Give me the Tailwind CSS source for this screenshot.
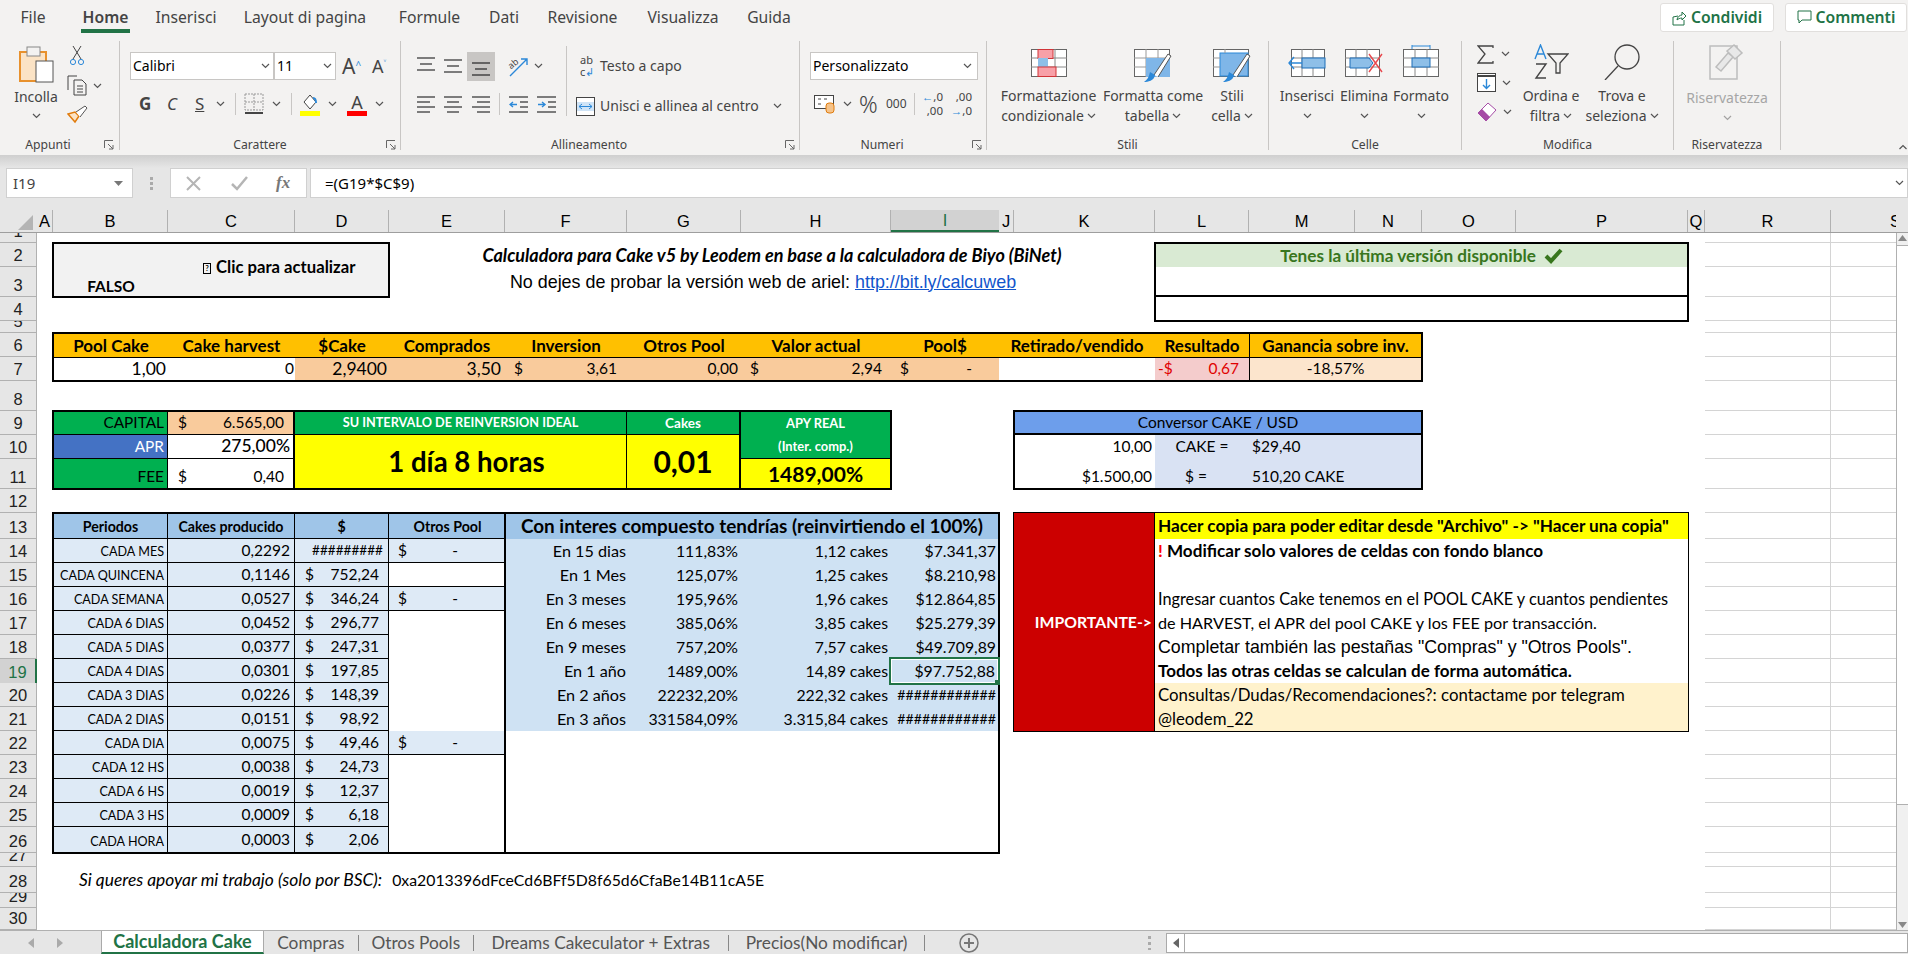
<!DOCTYPE html>
<html lang="it">
<head>
<meta charset="UTF-8" />
<title>Calculadora Cake - Excel</title>
<script src="https://cdn.jsdelivr.net/npm/@tailwindcss/browser@4"></script>
</head>
<body class="w-[1908px] h-[954px] overflow-hidden flex flex-col bg-[#e6e6e6] text-black font-['Lato',sans-serif]">

<svg class="hidden">
  <symbol id="chev" viewBox="0 0 9 6"><path d="M1 1l3.5 3.5L8 1" fill="none" stroke="#555" stroke-width="1.2"/></symbol>
  <symbol id="launch" viewBox="0 0 10 10"><path d="M.5 8V.5H9M4 4l5 5M9 5v4H5" fill="none" stroke="#666"/></symbol>
</svg>

<!-- ribbon tabs -->
<div class="h-[37px] pl-[4px] pb-[2px] flex items-center bg-[#f3f2f1] text-[#444] text-[15.7px] font-['Noto_Sans',sans-serif] relative">
  <div class="w-[60px] pr-[2px] text-center">File</div>
  <div class="w-[83px] text-center font-semibold relative">Home<div class="absolute left-[17px] w-[49px] top-[23px] h-[4px] bg-[#217346]"></div></div>
  <div class="w-[78px] text-center">Inserisci</div>
  <div class="w-[163px] pr-[3px] text-center">Layout di pagina</div>
  <div class="w-[83px] text-center">Formule</div>
  <div class="w-[66px] text-center">Dati</div>
  <div class="w-[91px] text-center">Revisione</div>
  <div class="w-[110px] text-center">Visualizza</div>
  <div class="w-[62px] text-center">Guida</div>
  <div class="ml-auto mr-[1px] flex gap-[11px] text-[#217346] font-semibold">
    <div class="w-[114px] h-[29px] bg-white border border-[#e1dfdd] rounded-[3px] flex items-center justify-center gap-[4px]">
      <svg width="15" height="16" viewBox="0 0 15 16" fill="none" stroke="#217346"><path d="M1 15V7l5-1M1 15h11v-5M5 10c0-3 3-5 5-5V2l4 4-4 4V8c-2 0-4 1-5 2z"/></svg>Condividi</div>
    <div class="w-[122px] h-[29px] bg-white border border-[#e1dfdd] rounded-[3px] flex items-center justify-center gap-[4px]">
      <svg width="15" height="15" viewBox="0 0 15 15" fill="none" stroke="#217346"><path d="M1 1h13v9H5l-3 3v-3H1z"/></svg>Commenti</div>
  </div>
</div>

<!-- ribbon -->
<div class="h-[118px] pt-[4px] flex bg-[#f3f2f1] text-[#444] text-[14px] leading-[20px] font-['Noto_Sans',sans-serif]">

  <!-- Appunti -->
  <div class="relative w-[120px] h-[109px] border-r border-[#c8c6c4] flex">
    <div class="w-[66px] flex flex-col items-center pl-[6px] pt-[5px]">
      <svg width="35" height="37" viewBox="0 0 35 37"><rect x="1" y="6" width="26" height="29" fill="#fbe3c5" stroke="#e8912d" stroke-width="2"/><rect x="8" y="1" width="13" height="9" fill="#f3f2f1" stroke="#888"/><rect x="17" y="15" width="17" height="21" fill="#fff" stroke="#555"/></svg>
      <div class="mt-[4px]">Incolla</div>
      <svg class="w-[9px] h-[6px] mt-[6px]"><use href="#chev"/></svg>
    </div>
    <div class="pt-[4px] pl-[1px] flex flex-col">
      <svg width="20" height="21" viewBox="0 0 20 21" fill="none"><path d="M6 1l8 13M14 1L6 14" stroke="#444"/><circle cx="6" cy="17" r="2.6" stroke="#2b88d8"/><circle cx="14" cy="17" r="2.6" stroke="#2b88d8"/></svg>
      <div class="mt-[9px] flex items-center gap-[5px]">
        <svg width="21" height="21" viewBox="0 0 21 21" fill="none" stroke="#444"><path d="M1 15V1h9M7 5h8l4 4v11H7zM10 11h6M10 14h6M10 17h6"/></svg>
        <svg class="w-[9px] h-[6px]"><use href="#chev"/></svg>
      </div>
      <svg class="mt-[9px]" width="21" height="19" viewBox="0 0 21 19"><path d="M1 9l7 8 4-6-4-4z" fill="#fbe3c5" stroke="#e07b0c" stroke-width="1.5"/><path d="M9 7l9-6 2 2-7 9" fill="#fff" stroke="#555"/></svg>
    </div>
    <div class="absolute inset-x-0 bottom-[-5px] pr-[23px] text-center text-[12.2px]">Appunti</div>
    <svg class="absolute right-[5px] bottom-[0px] w-[10px] h-[10px]"><use href="#launch"/></svg>
  </div>

  <!-- Carattere -->
  <div class="relative w-[281px] h-[109px] border-r border-[#c8c6c4] pl-[10px] pt-[11px]">
    <div class="flex items-center h-[28px]">
      <div class="w-[144px] h-[28px] bg-white border border-[#c8c6c4] flex items-center justify-between pl-[2px] pr-[3px] text-black"><span>Calibri</span><svg class="w-[9px] h-[6px]"><use href="#chev"/></svg></div>
      <div class="w-[62px] h-[28px] bg-white border border-[#c8c6c4] flex items-center justify-between pl-[2px] pr-[3px] text-black"><span>11</span><svg class="w-[9px] h-[6px]"><use href="#chev"/></svg></div>
      <div class="ml-[6px] w-[30px] text-[21px]">A<sup class="text-[#2b88d8] text-[10px]">^</sup></div>
      <div class="text-[18px]">A<sup class="text-[#2b88d8] text-[10px]">˅</sup></div>
    </div>
    <div class="mt-[10px] h-[28px] flex items-center">
      <span class="ml-[9px] w-[28px] font-bold text-[17px]">G</span>
      <span class="w-[28px] italic text-[17px]">C</span>
      <span class="w-[21px] underline text-[17px]">S</span>
      <svg class="w-[9px] h-[6px]"><use href="#chev"/></svg>
      <div class="ml-[10px] w-px h-[22px] bg-[#c8c6c4]"></div>
      <svg class="ml-[8px]" width="20" height="22" viewBox="0 0 20 22" fill="none"><path d="M1 1h18v16H1zM10 1v16M1 9h18" stroke="#999" stroke-dasharray="2 1"/><path d="M1 20h18" stroke="#444" stroke-width="2"/></svg>
      <svg class="ml-[8px] w-[9px] h-[6px]"><use href="#chev"/></svg>
      <div class="ml-[10px] w-px h-[22px] bg-[#c8c6c4]"></div>
      <svg class="ml-[8px]" width="20" height="23" viewBox="0 0 20 23"><path d="M4 9l6-7 6 7-6 7z" fill="#fff" stroke="#444"/><path d="M13 5c3 0 3 3 3 5" stroke="#2b88d8" stroke-width="2" fill="none"/><rect y="18" width="20" height="5" fill="#ffff00"/></svg>
      <svg class="ml-[8px] w-[9px] h-[6px]"><use href="#chev"/></svg>
      <div class="ml-[10px] w-[20px] flex flex-col items-center"><span class="text-[18px] leading-[18px]">A</span><div class="w-[20px] h-[5px] bg-[#ff0000]"></div></div>
      <svg class="ml-[8px] w-[9px] h-[6px]"><use href="#chev"/></svg>
    </div>
    <div class="absolute inset-x-0 bottom-[-5px] text-center text-[12.2px]">Carattere</div>
    <svg class="absolute right-[4px] bottom-[0px] w-[10px] h-[10px]"><use href="#launch"/></svg>
  </div>

  <!-- Allineamento -->
  <div class="relative w-[399px] h-[109px] border-r border-[#c8c6c4] pl-[16px] pt-[11px] flex">
    <div class="flex flex-col">
      <div class="h-[28px] flex items-center">
        <svg width="18" height="20" viewBox="0 0 18 20" stroke="#555" stroke-width="1.4"><path d="M0 2h18M3 8h12M0 14h18"/></svg>
        <svg class="ml-[9px]" width="18" height="20" viewBox="0 0 18 20" stroke="#555" stroke-width="1.4"><path d="M0 4h18M3 10h12M0 16h18"/></svg>
        <div class="ml-[5px] w-[28px] h-[29px] bg-[#c8c6c4] flex items-center justify-center"><svg width="18" height="20" viewBox="0 0 18 20" stroke="#444" stroke-width="1.4"><path d="M0 7h18M3 13h12M0 19h18"/></svg></div>
        <svg class="ml-[13px] overflow-visible" width="21" height="21" viewBox="0 0 21 21" fill="none"><path d="M2 20L19 3M13 3h6v6" stroke="#2b88d8" stroke-width="1.4"/><text x="0" y="11" font-size="9" fill="#444" transform="rotate(-40 5 8)">ab</text></svg>
        <svg class="ml-[5px] w-[9px] h-[6px]"><use href="#chev"/></svg>
      </div>
      <div class="mt-[10px] h-[28px] flex items-center">
        <svg width="18" height="18" viewBox="0 0 18 18" stroke="#555" stroke-width="1.4"><path d="M0 2h18M0 7h13M0 12h18M0 17h13"/></svg>
        <svg class="ml-[9px]" width="18" height="18" viewBox="0 0 18 18" stroke="#555" stroke-width="1.4"><path d="M0 2h18M3 7h12M0 12h18M3 17h12"/></svg>
        <svg class="ml-[10px]" width="18" height="18" viewBox="0 0 18 18" stroke="#555" stroke-width="1.4"><path d="M0 2h18M5 7h13M0 12h18M5 17h13"/></svg>
        <div class="ml-[9px] w-px h-[22px] bg-[#c8c6c4]"></div>
        <svg class="ml-[9px]" width="19" height="18" viewBox="0 0 19 18" fill="none"><path d="M0 2h19M0 17h19M11 7h8M11 12h8" stroke="#555" stroke-width="1.4"/><path d="M8 9.500H1M4 7L1 9.500 4 12" stroke="#2b88d8" stroke-width="1.4"/></svg>
        <svg class="ml-[9px]" width="19" height="18" viewBox="0 0 19 18" fill="none"><path d="M0 2h19M0 17h19M11 7h8M11 12h8" stroke="#555" stroke-width="1.4"/><path d="M1 9.500h7M5 7l3 2.500L5 12" stroke="#2b88d8" stroke-width="1.4"/></svg>
      </div>
    </div>
    <div class="ml-[10px] mt-[-6px] w-px h-[70px] bg-[#c8c6c4]"></div>
    <div class="ml-[9px] flex flex-col">
      <div class="h-[28px] flex items-center pl-[4px]">
        <div class="w-[16px] text-[11px] leading-[12px] text-[#444]"><div>ab</div><div>c<span class="text-[#2b88d8]">↲</span></div></div>
        <span class="ml-[4px]">Testo a capo</span>
      </div>
      <div class="mt-[12px] h-[28px] flex items-center">
        <svg width="19" height="19" viewBox="0 0 19 19" fill="none"><rect x=".5" y=".5" width="18" height="18" stroke="#444" fill="#fff"/><rect x="1" y="5" width="17" height="9" fill="#cfe4f7"/><path d="M3 9.500h13M6 7L3 9.500 6 12M13 7l3 2.500L13 12" stroke="#2b88d8"/></svg>
        <span class="ml-[5px]">Unisci e allinea al centro</span>
        <svg class="ml-[14px] w-[9px] h-[6px]"><use href="#chev"/></svg>
      </div>
    </div>
    <div class="absolute inset-x-0 bottom-[-5px] pr-[22px] text-center text-[12.2px]">Allineamento</div>
    <svg class="absolute right-[4px] bottom-[0px] w-[10px] h-[10px]"><use href="#launch"/></svg>
  </div>

  <!-- Numeri -->
  <div class="relative w-[187px] h-[109px] border-r border-[#c8c6c4] pl-[10px] pt-[11px]">
    <div class="w-[168px] h-[28px] bg-white border border-[#c8c6c4] flex items-center justify-between pl-[2px] pr-[5px] text-black"><span>Personalizzato</span><svg class="w-[9px] h-[6px]"><use href="#chev"/></svg></div>
    <div class="mt-[10px] h-[28px] flex items-center">
      <svg class="ml-[4px]" width="21" height="20" viewBox="0 0 21 20" fill="none"><rect x=".5" y="1.500" width="19" height="13" fill="#fff" stroke="#444"/><path d="M4 5h3M4 10h3M10 5h3" stroke="#444"/><rect x="12" y="9" width="8" height="10" rx="3" fill="#f5c38a" stroke="#e07b0c"/></svg>
      <svg class="ml-[8px] w-[9px] h-[6px]"><use href="#chev"/></svg>
      <span class="ml-[7px] text-[23px] font-light w-[27px]">%</span>
      <span class="text-[12px] w-[28px]">000</span>
      <div class="w-px h-[22px] bg-[#c8c6c4]"></div>
      <div class="ml-[6px] w-[22px] text-[11.5px] leading-[14px] text-right"><div><span class="text-[#2b88d8]">←</span>,0</div><div>,00</div></div>
      <div class="ml-[7px] w-[22px] text-[11.5px] leading-[14px] text-right"><div>,00</div><div><span class="text-[#2b88d8]">→</span>,0</div></div>
    </div>
    <div class="absolute inset-x-0 bottom-[-5px] pr-[22px] text-center text-[12.2px]">Numeri</div>
    <svg class="absolute right-[4px] bottom-[0px] w-[10px] h-[10px]"><use href="#launch"/></svg>
  </div>

  <!-- Stili -->
  <div class="relative w-[282px] h-[109px] border-r border-[#c8c6c4] pt-[8px] pl-[10px] flex text-center">
    <div class="w-[103px] flex flex-col items-center">
      <svg width="36" height="28" viewBox="0 0 36 28"><rect x=".5" y=".5" width="35" height="27" fill="#fff" stroke="#666"/><path d="M12 0v28M24 0v28M0 9h36M0 18h36" stroke="#888"/><rect x="7" y=".5" width="15" height="9" fill="#f8a0a8" stroke="#d13438"/><rect x="7" y="9" width="10" height="9" fill="#8ebfe8"/><rect x="7" y="18" width="18" height="9.500" fill="#f8a0a8" stroke="#d13438"/></svg>
      <div class="mt-[9px]">Formattazione</div>
      <div class="flex items-center gap-[3px]">condizionale <svg class="w-[9px] h-[6px]"><use href="#chev"/></svg></div>
    </div>
    <div class="w-[106px] flex flex-col items-center">
      <svg width="38" height="34" viewBox="0 0 38 34"><rect x=".5" y=".5" width="35" height="27" fill="#fff" stroke="#666"/><path d="M12 0v28M24 0v28M0 9h36M0 18h36" stroke="#999"/><rect x="12" y="9" width="24" height="19" fill="#7fb6e8"/><path d="M20 26L34 5l3 2-13 21" fill="#fff" stroke="#555"/><path d="M10 33c4 0 10-1 11-7l-5-3c-1 5-3 8-6 10z" fill="#2b88d8"/></svg>
      <div class="mt-[3px]">Formatta come</div>
      <div class="flex items-center gap-[3px]">tabella <svg class="w-[9px] h-[6px]"><use href="#chev"/></svg></div>
    </div>
    <div class="w-[52px] flex flex-col items-center">
      <svg width="38" height="34" viewBox="0 0 38 34"><rect x=".5" y=".5" width="35" height="27" fill="#fff" stroke="#666"/><rect x="7" y="4" width="28" height="23" fill="#7fb6e8" stroke="#2b88d8"/><path d="M0 9h7M0 18h7M12 0v4" stroke="#999"/><path d="M20 26L34 5l3 2-13 21" fill="#fff" stroke="#555"/><path d="M10 33c4 0 10-1 11-7l-5-3c-1 5-3 8-6 10z" fill="#2b88d8"/></svg>
      <div class="mt-[3px]">Stili</div>
      <div class="flex items-center gap-[3px]">cella <svg class="w-[9px] h-[6px]"><use href="#chev"/></svg></div>
    </div>
    <div class="absolute inset-x-0 bottom-[-5px] text-center text-[12.2px]">Stili</div>
  </div>

  <!-- Celle -->
  <div class="relative w-[193px] h-[109px] border-r border-[#c8c6c4] pt-[8px] pl-[9px] flex text-center">
    <div class="w-[58px] flex flex-col items-center">
      <svg width="38" height="28" viewBox="0 0 38 28"><rect x="3.500" y=".5" width="33" height="27" fill="#fff" stroke="#666"/><path d="M14 0v28M25 0v28M3 9h34M3 18h34" stroke="#888"/><rect x="14" y="9" width="23" height="10" fill="#8ebfe8" stroke="#1f6fb8"/><path d="M14 14H1M6 8l-5 6 5 6" fill="none" stroke="#2b88d8" stroke-width="1.4"/></svg>
      <div class="mt-[9px]">Inserisci</div>
      <svg class="w-[9px] h-[6px] mt-[7px]"><use href="#chev"/></svg>
    </div>
    <div class="w-[56px] flex flex-col items-center">
      <svg width="38" height="28" viewBox="0 0 38 28"><rect x=".5" y=".5" width="34" height="27" fill="#fff" stroke="#666"/><path d="M11 0v28M22 0v28M0 9h35M0 18h35" stroke="#888"/><path d="M5 9h19l4 5-4 5H5z" fill="#8ebfe8" stroke="#1f6fb8"/><path d="M24 5l13 18M37 5L24 23" stroke="#e8474c" stroke-width="1.4"/></svg>
      <div class="mt-[9px]">Elimina</div>
      <svg class="w-[9px] h-[6px] mt-[7px]"><use href="#chev"/></svg>
    </div>
    <div class="w-[58px] flex flex-col items-center mt-[-5px]">
      <svg width="36" height="33" viewBox="0 0 36 33"><path d="M9 1v4M27 1v4M9 2h18" stroke="#2b88d8" fill="none"/><rect x=".5" y="5.500" width="35" height="27" fill="#fff" stroke="#666"/><path d="M12 5v28M24 5v28M0 14h36M0 23h36" stroke="#888"/><rect x="9" y="14" width="18" height="9" fill="#8ebfe8" stroke="#1f6fb8"/></svg>
      <div class="mt-[9px]">Formato</div>
      <svg class="w-[9px] h-[6px] mt-[7px]"><use href="#chev"/></svg>
    </div>
    <div class="absolute inset-x-0 bottom-[-5px] text-center text-[12.2px]">Celle</div>
  </div>

  <!-- Modifica -->
  <div class="relative w-[212px] h-[109px] border-r border-[#c8c6c4] pt-[3px] pl-[15px] flex text-center">
    <div class="w-[41px] flex flex-col">
      <div class="h-[20px] flex items-center gap-[7px]"><svg width="17" height="19" viewBox="0 0 17 19" fill="none" stroke="#444" stroke-width="1.3"><path d="M16 3V1H1l7 8-7 9h15v-2"/></svg><svg class="w-[9px] h-[6px]"><use href="#chev"/></svg></div>
      <div class="mt-[9px] h-[19px] flex items-center gap-[6px]"><svg width="19" height="19" viewBox="0 0 19 19" fill="none"><rect x=".5" y=".5" width="18" height="18" fill="#fff" stroke="#444"/><path d="M0 3h19" stroke="#444" stroke-width="2"/><path d="M9.500 6v9M6 12l3.500 3.500L13 12" stroke="#2b88d8" stroke-width="1.4"/></svg><svg class="w-[9px] h-[6px]"><use href="#chev"/></svg></div>
      <div class="mt-[10px] h-[20px] flex items-center gap-[6px]"><svg width="20" height="20" viewBox="0 0 20 20"><path d="M1 11L11 1l8 7-10 11z" fill="#fff" stroke="#a64ca6"/><path d="M1 11l4-4 8 8-4 4z" fill="#a64ca6"/></svg><svg class="w-[9px] h-[6px]"><use href="#chev"/></svg></div>
    </div>
    <div class="w-[66px] flex flex-col items-center">
      <svg width="36" height="36" viewBox="0 0 36 36" fill="none"><path d="M2 15L7.500 1 13 15M4 10h7" stroke="#2b88d8" stroke-width="1.4"/><path d="M3 20h10L3 34h10" stroke="#444" stroke-width="1.4"/><path d="M15 10h20l-8 9v10h-4V19z" stroke="#444" stroke-width="1.3"/></svg>
      <div class="mt-[6px]">Ordina e</div>
      <div class="flex items-center gap-[3px]">filtra <svg class="w-[9px] h-[6px]"><use href="#chev"/></svg></div>
    </div>
    <div class="w-[76px] flex flex-col items-center">
      <svg width="38" height="36" viewBox="0 0 38 36" fill="none" stroke="#444" stroke-width="1.3"><circle cx="24" cy="13" r="12"/><path d="M15 22L2 36"/></svg>
      <div class="mt-[6px]">Trova e</div>
      <div class="flex items-center gap-[3px]">seleziona <svg class="w-[9px] h-[6px]"><use href="#chev"/></svg></div>
    </div>
    <div class="absolute inset-x-0 bottom-[-5px] text-center text-[12.2px]">Modifica</div>
  </div>

  <!-- Riservatezza -->
  <div class="relative w-[107px] h-[109px] border-r border-[#c8c6c4] pt-[2px] flex flex-col items-center text-[#a6a6a6]">
    <svg width="36" height="38" viewBox="0 0 36 38" fill="none" stroke="#bdbdbd" stroke-width="1.5"><rect x="1" y="3" width="27" height="33"/><path d="M7 24L19 10l5 4-12 14zM18 8l7-6 8 8-7 6z" fill="#e8e8e8"/></svg>
    <div class="mt-[7px]">Riservatezza</div>
    <svg class="w-[9px] h-[6px] mt-[7px] opacity-50"><use href="#chev"/></svg>
    <div class="absolute inset-x-0 bottom-[-5px] text-center text-[12.2px] text-[#444]">Riservatezza</div>
  </div>

  <div class="flex-1 relative"><svg class="absolute right-[0px] top-[103px] w-[10px] h-[6px] rotate-180"><use href="#chev"/></svg></div>
</div>

<div class="h-[13px] bg-linear-to-b from-[#cfcfcf] to-[#e6e6e6]"></div>

<!-- formula bar -->
<div class="h-[30px] flex items-stretch text-[#444] text-[15px] font-['Noto_Sans',sans-serif]">
  <div class="ml-[6px] w-[127px] bg-white border border-[#d0d0d0] flex items-center justify-between pl-[6px] pr-[9px]">I19<svg width="9" height="5" viewBox="0 0 9 5"><path d="M0 0h9L4.500 5z" fill="#777"/></svg></div>
  <div class="w-[37px] flex flex-col items-center justify-center gap-[2px]"><div class="w-[3px] h-[3px] bg-[#aaa]"></div><div class="w-[3px] h-[3px] bg-[#aaa]"></div><div class="w-[3px] h-[3px] bg-[#aaa]"></div></div>
  <div class="w-[137px] bg-white border border-[#d0d0d0] flex items-center">
    <svg class="ml-[15px]" width="15" height="15" viewBox="0 0 15 15" stroke="#b5b5b5" stroke-width="2"><path d="M1 1l13 13M14 1L1 14"/></svg>
    <svg class="ml-[30px]" width="17" height="15" viewBox="0 0 17 15" fill="none" stroke="#b5b5b5" stroke-width="2.500"><path d="M1 8l5 5L16 1"/></svg>
    <span class="ml-[28px] italic font-['Liberation_Serif',serif] font-bold text-[17px] text-[#777]">fx</span>
  </div>
  <div class="ml-[3px] flex-1 bg-white border border-[#d0d0d0] flex items-center justify-between pl-[14px] pr-[3px]"><span class="text-black">=(G19*$C$9)</span><svg class="w-[9px] h-[6px]"><use href="#chev"/></svg></div>
</div>
<div class="h-[12px]"></div>

<!-- column headers -->
<div id="colHeads" class="h-[23px] grid grid-cols-[37px_16px_115px_127px_94px_116px_122px_114px_150px_108px_15px_141px_94px_106px_67px_94px_172px_17px_126px_65px_12px] text-[16.5px] font-['Liberation_Sans',sans-serif] border-b border-[#9e9e9e]">
  <div class="relative"><svg class="absolute left-[18px] top-[5px]" width="15" height="15" viewBox="0 0 15 15"><path d="M15 0v15H0z" fill="#b4b4b4"/></svg></div>
</div>

<div class="h-[697px] flex">
  <!-- sheet -->
  <div class="w-[1896px] bg-white grid grid-cols-[37px_16px_115px_127px_94px_116px_122px_114px_150px_108px_15px_141px_94px_106px_67px_94px_172px_17px_126px_65px] grid-rows-[10px_24px_30px_24px_12px_24px_24px_30px_24px_24px_30px_24px_26px_repeat(12,24px)_26px_14px_26px_15px_22px] text-[15.5px]">

    <div id="rowHeads" class="col-[1] row-[1/-1] grid grid-rows-subgrid text-[16.5px] font-['Liberation_Sans',sans-serif]"></div>
    <div id="freeCells" class="col-[19/21] row-[1/-1] grid grid-cols-subgrid grid-rows-subgrid"></div>

    <!-- update box -->
    <div class="col-[3/6] row-[2/4] -m-px border-2 border-black bg-[#f2f2f2] grid grid-cols-subgrid font-bold">
      <div class="flex items-end justify-center pb-[2px] leading-[16px]">FALSO</div>
      <div class="col-span-2 flex items-center justify-start pl-[35px] gap-[5px] text-[16.7px] pb-[4px]"><span class="inline-flex w-[8px] h-[11px] border border-black text-[7px] items-center justify-center">?</span>Clic para actualizar</div>
    </div>

    <!-- title -->
    <div class="col-[6/13] row-[2] flex items-center justify-center font-bold italic text-[18px]">Calculadora para Cake v5 by Leodem en base a la calculadora de Biyo (BiNet)</div>
    <div class="col-[6/13] row-[3] pr-[18px] flex items-center justify-center font-['Liberation_Sans',sans-serif] text-[17.9px]">No dejes de probar la versión web de ariel:&nbsp;<span class="text-[#1155cc] underline">http://bit.ly/calcuweb</span></div>

    <!-- version box -->
    <div class="col-[13/18] row-[2/5] -m-px border-2 border-black grid grid-rows-subgrid">
      <div class="bg-[#d9ead3] text-[#38761d] font-bold text-[17.2px] flex items-center justify-center gap-[8px]">Tenes la última versión disponible
        <svg width="19" height="16" viewBox="0 0 19 16"><path d="M2 8l5 5L17 2" fill="none" stroke="#38761d" stroke-width="4"/></svg></div>
      <div class="border-b-2 border-black"></div>
      <div></div>
    </div>

    <!-- pool row -->
    <div class="col-[3/16] row-[6/8] -m-px border-2 border-black grid grid-cols-subgrid grid-rows-subgrid">
      <div class="bg-[#ffc000] font-bold text-[17px] flex items-center justify-center">Pool Cake</div>
      <div class="bg-[#ffc000] font-bold text-[17px] flex items-center justify-center">Cake harvest</div>
      <div class="bg-[#ffc000] font-bold text-[17px] flex items-center justify-center">$Cake</div>
      <div class="bg-[#ffc000] font-bold text-[17px] flex items-center justify-center">Comprados</div>
      <div class="bg-[#ffc000] font-bold text-[17px] flex items-center justify-center">Inversion</div>
      <div class="bg-[#ffc000] font-bold text-[17px] flex items-center justify-center">Otros Pool</div>
      <div class="bg-[#ffc000] font-bold text-[17px] flex items-center justify-center">Valor actual</div>
      <div class="bg-[#ffc000] font-bold text-[17px] flex items-center justify-center">Pool$</div>
      <div class="col-span-2 bg-[#ffc000] font-bold text-[17px] flex items-center justify-center">Retirado/vendido</div>
      <div class="bg-[#ffc000] font-bold text-[17px] flex items-center justify-center">Resultado</div>
      <div class="col-span-2 bg-[#ffc000] border-l border-black font-bold text-[17px] flex items-center justify-center">Ganancia sobre inv.</div>

      <div class="border-t border-black flex items-center justify-end pr-[2px] text-[17.5px]">1,00</div>
      <div class="border-t border-black flex items-center justify-end pr-[1px]">0</div>
      <div class="border-t border-black bg-[#f9cb9c] flex items-center justify-end pr-[2px] text-[17.5px]">2,9400</div>
      <div class="border-t border-black bg-[#f9cb9c] flex items-center justify-end pr-[4px] text-[17.5px]">3,50</div>
      <div class="border-t border-black bg-[#f9cb9c] flex items-center justify-between pl-[9px] pr-[10px]"><span>$</span><span>3,61</span></div>
      <div class="border-t border-black bg-[#f9cb9c] flex items-center justify-end pr-[3px]">0,00</div>
      <div class="border-t border-black bg-[#f9cb9c] flex items-center justify-between pl-[9px] pr-[9px]"><span>$</span><span>2,94</span></div>
      <div class="border-t border-black bg-[#f9cb9c] flex items-center justify-between pl-[9px] pr-[27px]"><span>$</span><span>-</span></div>
      <div class="col-span-2 border-t border-black"></div>
      <div class="border-t border-black bg-[#f4cccc] text-[#e00000] flex items-center justify-between pl-[3px] pr-[10px]"><span>-$</span><span>0,67</span></div>
      <div class="col-span-2 border-t border-l border-black bg-[#fce5cd] flex items-center justify-center">-18,57%</div>
    </div>

    <!-- capital block -->
    <div class="col-[3/10] row-[9/12] -m-px border-2 border-black grid grid-cols-subgrid grid-rows-subgrid">
      <div class="bg-[#00b050] border-r border-b border-black flex items-center justify-end pr-[3px] text-[15.4px]">CAPITAL</div>
      <div class="bg-[#f9cb9c] border-b border-r-2 border-black flex items-center justify-between pl-[10px] pr-[9px]"><span>$</span><span>6.565,00</span></div>
      <div class="col-span-3 bg-[#00b050] border-b border-r border-black text-white font-bold text-[12.7px] flex items-center justify-center">SU INTERVALO DE REINVERSION IDEAL</div>
      <div class="bg-[#00b050] border-b border-r-2 border-black text-white font-bold text-[13.5px] flex items-center justify-center">Cakes</div>
      <div class="row-span-2 bg-[#00b050] border-b border-black text-white font-bold text-[12.9px] grid grid-rows-2 place-items-center text-center"><span>APY REAL</span><span>(Inter. comp.)</span></div>

      <div class="bg-[#4472c4] border-r border-b border-black text-white flex items-center justify-end pr-[3px] text-[15.4px]">APR</div>
      <div class="border-b border-r-2 border-black flex items-center justify-end pr-[3px] text-[17.5px] font-medium">275,00%</div>
      <div class="col-span-3 row-span-2 bg-[#ffff00] border-r border-black font-bold text-[27.6px] pl-[12px] flex items-center justify-center">1 día 8 horas</div>
      <div class="row-span-2 bg-[#ffff00] border-r-2 border-black font-bold text-[30px] flex items-center justify-center">0,01</div>

      <div class="bg-[#00b050] border-r border-black flex items-end justify-end pr-[3px] text-[15.4px]">FEE</div>
      <div class="border-r-2 border-black flex items-end justify-between pl-[10px] pr-[9px]"><span>$</span><span>0,40</span></div>
      <div class="bg-[#ffff00] font-bold text-[21px] leading-[26px] flex items-center justify-center">1489,00%</div>
    </div>

    <!-- conversor -->
    <div class="col-[12/16] row-[9/12] -m-px border-2 border-black grid grid-cols-subgrid grid-rows-subgrid">
      <div class="col-span-4 bg-[#6d9eeb] border-b-2 border-black flex items-center justify-center">Conversor CAKE / USD</div>
      <div class="flex items-center justify-end pr-[3px]">10,00</div>
      <div class="bg-[#d9e2f3] flex items-center justify-center">CAKE =</div>
      <div class="col-span-2 bg-[#d9e2f3] flex items-center pl-[3px]">$29,40</div>
      <div class="flex items-end justify-end pr-[3px]">$1.500,00</div>
      <div class="bg-[#d9e2f3] flex items-end justify-center pr-[12px]">$ =</div>
      <div class="col-span-2 bg-[#d9e2f3] flex items-end pl-[3px]">510,20 CAKE</div>
    </div>

    <!-- periods table -->
    <div id="periods" class="col-[3/7] row-[13/27] -m-px border-2 border-r-0 border-black grid grid-cols-subgrid grid-rows-subgrid">
      <div class="bg-[#9fc5e8] border-r border-b border-black font-bold text-[14.2px] flex items-end justify-center pb-[1px]">Periodos</div>
      <div class="bg-[#9fc5e8] border-r border-b border-black font-bold text-[14.2px] flex items-end justify-center pb-[1px]">Cakes producido</div>
      <div class="bg-[#9fc5e8] border-r border-b border-black font-bold text-[14.2px] flex items-end justify-center pb-[1px]">$</div>
      <div class="bg-[#9fc5e8] border-b border-black font-bold text-[14.2px] flex items-end justify-center pb-[1px]">Otros Pool</div>
    </div>

    <!-- compound table -->
    <div id="compound" class="col-[7/11] row-[13/27] -m-px border-2 border-black grid grid-cols-subgrid grid-rows-subgrid">
      <div class="col-span-4 bg-[#9fc5e8] font-bold text-[18.9px] flex items-center justify-center whitespace-nowrap">Con interes compuesto tendrías (reinvirtiendo el 100%)</div>
    </div>

    <!-- notes -->
    <div class="col-[12/18] row-[13/22] -m-px border border-black grid grid-cols-subgrid grid-rows-subgrid">
      <div class="row-span-9 bg-[#cc0000] border-r border-black text-white font-bold text-[15.8px] flex items-center justify-end pr-[2px]">IMPORTANTE-&gt;</div>
      <div class="col-span-5 bg-[#ffff00] font-bold text-[17.2px] flex items-center pl-[3px]">Hacer copia para poder editar desde "Archivo" -&gt; "Hacer una copia"</div>
      <div class="col-span-5 font-bold text-[17.1px] flex items-center pl-[3px]"><span class="text-[#ff0000]">!</span>&nbsp;Modificar solo valores de celdas con fondo blanco</div>
      <div class="col-span-5"></div>
      <div class="col-span-5 text-[16.3px] flex items-center pl-[3px]">Ingresar cuantos Cake tenemos en el POOL CAKE y cuantos pendientes</div>
      <div class="col-span-5 text-[16.2px] flex items-center pl-[3px]">de HARVEST, el APR del pool CAKE y los FEE por transacción.</div>
      <div class="col-span-5 flex items-center pl-[3px] font-['Liberation_Sans',sans-serif] text-[17.8px]">Completar también las pestañas "Compras" y "Otros Pools".</div>
      <div class="col-span-5 font-bold text-[17px] flex items-center pl-[3px]">Todos las otras celdas se calculan de forma automática.</div>
      <div class="col-span-5 bg-[#fff2cc] text-[16.8px] flex items-center pl-[3px]">Consultas/Dudas/Recomendaciones?: contactame por telegram</div>
      <div class="col-span-5 bg-[#fff2cc] text-[16.8px] flex items-center pl-[3px]">@leodem_22</div>
    </div>

    <!-- wallet -->
    <div class="col-[3/14] row-[28] pl-[26px] flex items-center whitespace-nowrap"><i class="text-[17.4px]">Si queres apoyar mi trabajo (solo por BSC):</i><span class="ml-[10px] text-[15.8px]">0xa2013396dFceCd6BFf5D8f65d6CfaBe14B11cA5E</span></div>
  </div>

  <!-- vertical scrollbar -->
  <div class="w-[12px] bg-[#f0f0f0] border-l border-[#b0b0b0] flex flex-col items-center">
    <svg class="mt-[2px]" width="9" height="6" viewBox="0 0 9 6"><path d="M4.500 0L9 6H0z" fill="#888"/></svg>
    <div class="mt-[4px] w-full h-[560px] bg-white border-y border-[#b0b0b0]"></div>
    <svg class="mt-auto mb-[2px]" width="9" height="6" viewBox="0 0 9 6"><path d="M0 0h9L4.500 6z" fill="#888"/></svg>
  </div>
</div>

<!-- sheet tabs -->
<div class="h-[24px] border-t border-[#b0b0b0] flex items-center text-[#555] text-[17.3px]">
  <svg class="ml-[28px]" width="6" height="10" viewBox="0 0 6 10"><path d="M6 0v10L0 5z" fill="#aaa"/></svg>
  <svg class="ml-[23px]" width="6" height="10" viewBox="0 0 6 10"><path d="M0 0v10l6-5z" fill="#aaa"/></svg>
  <div class="ml-[38px] w-[163px] h-full bg-white border-x border-b-2 border-[#aaa] border-b-[#217346] text-[#217346] font-bold text-[18px] flex items-center justify-center">Calculadora Cake</div>
  <div class="w-[95px] h-[16px] border-r border-[#888] flex items-center justify-center">Compras</div>
  <div class="w-[115px] h-[16px] border-r border-[#888] flex items-center justify-center">Otros Pools</div>
  <div class="w-[255px] h-[16px] border-r border-[#888] flex items-center justify-center">Dreams Cakeculator + Extras</div>
  <div class="w-[197px] h-[16px] border-r border-[#888] flex items-center justify-center">Precios(No modificar)</div>
  <svg class="ml-[34px]" width="20" height="20" viewBox="0 0 20 20" fill="none" stroke="#777" stroke-width="1.500"><circle cx="10" cy="10" r="9"/><path d="M10 5v10M5 10h10" stroke-width="2"/></svg>
  <div class="ml-[169px] w-[3px] h-[14px] bg-[repeating-linear-gradient(#aaa_0_3px,transparent_3px_6px)]"></div>
  <div class="ml-[15px] h-[20px] w-[742px] bg-white border border-[#aaa] flex">
    <div class="w-[18px] border-r border-[#aaa] flex items-center justify-center"><svg width="6" height="10" viewBox="0 0 6 10"><path d="M6 0v10L0 5z" fill="#666"/></svg></div>
  </div>
</div>

<script>
  const colNames = ["A","B","C","D","E","F","G","H","I","J","K","L","M","N","O","P","Q","R"];
  const colHeads = document.getElementById("colHeads");
  colNames.forEach((name) => {
    const cell = document.createElement("div");
    cell.className = "flex items-center justify-center overflow-hidden border-r border-[#b1b1b1]";
    if (name === "I") cell.className = "flex items-center justify-center overflow-hidden bg-[#d2d2d2] text-[#217346] border-b-2 border-[#217346]";
    cell.textContent = name;
    colHeads.appendChild(cell);
  });
  // column S is wider than the window, so its letter is cut by the scrollbar
  colHeads.insertAdjacentHTML("beforeend",
    '<div class="flex items-center justify-end overflow-hidden"><span class="translate-x-[5px]">S</span></div><div></div>');

  const rowHeads = document.getElementById("rowHeads");
  const freeCells = document.getElementById("freeCells");
  for (let n = 1; n <= 30; n++) {
    const head = document.createElement("div");
    head.className = "flex items-end justify-center overflow-hidden leading-[22px] bg-[#e6e6e6] border-b border-r border-[#b1b1b1] text-[#222]";
    if (n === 19) head.className = "flex items-end justify-center overflow-hidden leading-[22px] bg-[#d2d2d2] border-r-2 border-[#217346] text-[#217346]";
    head.textContent = n;
    rowHeads.appendChild(head);
    freeCells.insertAdjacentHTML("beforeend",
      '<div class="border-b border-r border-[#d4d4d4]"></div><div class="border-b border-[#d4d4d4]"></div>');
  }

  const periods = [
    ["CADA MES", "0,2292", "", "#########", true],
    ["CADA QUINCENA", "0,1146", "$", "752,24", false, true],
    ["CADA SEMANA", "0,0527", "$", "346,24", true],
    ["CADA 6 DIAS", "0,0452", "$", "296,77"],
    ["CADA 5 DIAS", "0,0377", "$", "247,31"],
    ["CADA 4 DIAS", "0,0301", "$", "197,85"],
    ["CADA 3 DIAS", "0,0226", "$", "148,39"],
    ["CADA 2 DIAS", "0,0151", "$", "98,92"],
    ["CADA DIA", "0,0075", "$", "49,46", true],
    ["CADA 12 HS", "0,0038", "$", "24,73"],
    ["CADA 6 HS", "0,0019", "$", "12,37"],
    ["CADA 3 HS", "0,0009", "$", "6,18"],
    ["CADA HORA", "0,0003", "$", "2,06"],
  ];
  const periodsBox = document.getElementById("periods");
  periods.forEach((p, i) => {
    const line = i < periods.length - 1 ? "border-b border-black" : "";
    const money = p[2]
      ? `<div class="bg-[#deeaf6] border-r ${line} border-black flex items-center justify-between pl-[10px] pr-[9px]"><span>${p[2]}</span><span>${p[3]}</span></div>`
      : `<div class="bg-[#deeaf6] border-r ${line} border-black flex items-center justify-end pr-[5px] text-[13.6px]">${p[3]}</div>`;
    periodsBox.insertAdjacentHTML("beforeend", `
      <div class="bg-[#deeaf6] border-r ${line} border-black flex items-end justify-end pr-[3px] text-[12.6px] leading-[20px] whitespace-nowrap">${p[0]}</div>
      <div class="bg-[#deeaf6] border-r ${line} border-black flex items-center justify-end pr-[4px]">${p[1]}</div>
      ${money}
      ${p[4]
        ? `<div class="bg-[#deeaf6] border-b border-black flex items-center justify-between pl-[9px] pr-[48px]"><span>$</span><span>-</span></div>`
        : `<div class="bg-white ${p[5] ? "border-b border-black" : ""}"></div>`}
    `);
  });

  const compound = [
    ["En 15 dias", "111,83%", "1,12 cakes", "$7.341,37"],
    ["En 1 Mes", "125,07%", "1,25 cakes", "$8.210,98"],
    ["En 3 meses", "195,96%", "1,96 cakes", "$12.864,85"],
    ["En 6 meses", "385,06%", "3,85 cakes", "$25.279,39"],
    ["En 9 meses", "757,20%", "7,57 cakes", "$49.709,89"],
    ["En 1 año", "1489,00%", "14,89 cakes", "$97.752,88"],
    ["En 2 años", "22232,20%", "222,32 cakes", "############"],
    ["En 3 años", "331584,09%", "3.315,84 cakes", "############"],
  ];
  const compoundBox = document.getElementById("compound");
  compound.forEach((c, i) => {
    const base = "bg-[#cfe2f3] flex items-center justify-end";
    let last = base + " text-[15.8px]";
    if (i === 5) last = "relative z-10 bg-[#cfe2f3] flex items-center justify-end text-[15.8px] border border-white outline-2 outline-[#217346]";
    if (i > 5) last = base + " text-[14.2px]";
    const handle = i === 5 ? '<div class="absolute -right-[3px] -bottom-[3px] w-[5px] h-[5px] bg-[#217346]"></div>' : "";
    compoundBox.insertAdjacentHTML("beforeend", `
      <div class="${base} pr-[1px] text-[16.2px]">${c[0]}</div>
      <div class="${base} pr-[3px] text-[15.8px]">${c[1]}</div>
      <div class="${base} pr-[3px] text-[15.8px]">${c[2]}</div>
      <div class="${last} pr-[2px] whitespace-nowrap">${c[3]}${handle}</div>
    `);
  });
  // white area under the compound rows
  compoundBox.insertAdjacentHTML("beforeend", '<div class="col-span-4 row-span-5"></div>');
</script>
</body>
</html>
